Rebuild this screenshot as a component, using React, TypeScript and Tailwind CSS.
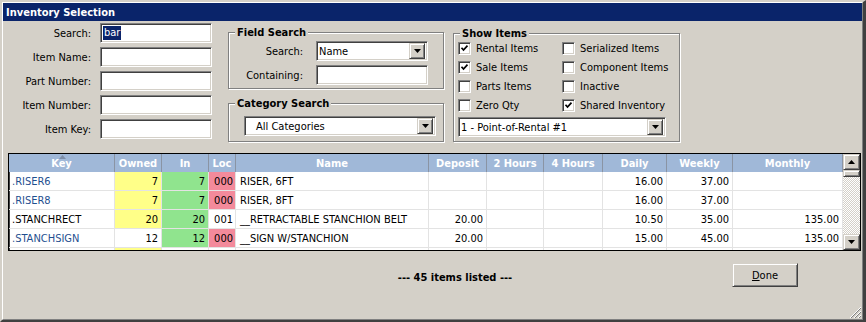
import React from "react";

type Row = {
  key: string;
  blue: boolean;
  owned: string;
  ownedColor: string;
  inQty: string;
  loc: string;
  locPink: boolean;
  name: string;
  deposit: string;
  daily: string;
  weekly: string;
  monthly: string;
};

const rows: Row[] = [
  { key: ".RISER6", blue: true, owned: "7", ownedColor: "bg-[#ffff88]", inQty: "7", loc: "000", locPink: true, name: "RISER, 6FT", deposit: "", daily: "16.00", weekly: "37.00", monthly: "" },
  { key: ".RISER8", blue: true, owned: "7", ownedColor: "bg-[#ffff88]", inQty: "7", loc: "000", locPink: true, name: "RISER, 8FT", deposit: "", daily: "16.00", weekly: "37.00", monthly: "" },
  { key: ".STANCHRECT", blue: false, owned: "20", ownedColor: "bg-[#ffff88]", inQty: "20", loc: "001", locPink: false, name: "__RETRACTABLE STANCHION BELT", deposit: "20.00", daily: "10.50", weekly: "35.00", monthly: "135.00" },
  { key: ".STANCHSIGN", blue: true, owned: "12", ownedColor: "bg-white", inQty: "12", loc: "000", locPink: true, name: "__SIGN W/STANCHION", deposit: "20.00", daily: "15.00", weekly: "45.00", monthly: "135.00" },
  { key: "", blue: false, owned: "", ownedColor: "bg-[#ffff88]", inQty: "", loc: "", locPink: false, name: "", deposit: "", daily: "", weekly: "", monthly: "" },
];

const headers = [
  { label: "Key", w: "w-[106px]" },
  { label: "Owned", w: "w-[47px]" },
  { label: "In", w: "w-[47px]" },
  { label: "Loc", w: "w-[27px]" },
  { label: "Name", w: "w-[193px]" },
  { label: "Deposit", w: "w-[58px]" },
  { label: "2 Hours", w: "w-[57px]" },
  { label: "4 Hours", w: "w-[59px]" },
  { label: "Daily", w: "w-[64px]" },
  { label: "Weekly", w: "w-[66px]" },
  { label: "Monthly", w: "w-[110px]" },
];

const sunken =
  "border border-t-[#808080] border-l-[#808080] border-b-white border-r-white shadow-[inset_1px_1px_0_#404040,inset_-1px_-1px_0_#d4d0c8]";
const raised =
  "border border-t-[#d4d0c8] border-l-[#d4d0c8] border-b-[#404040] border-r-[#404040] shadow-[inset_1px_1px_0_#fff,inset_-1px_-1px_0_#808080]";

function DownArrow() {
  return (
    <svg width="7" height="4" viewBox="0 0 7 4">
      <path d="M0 0h7L3.5 4z" fill="#000" />
    </svg>
  );
}

function TextBox({ value, selected }: { value?: string; selected?: boolean }) {
  return (
    <div className={`h-[20px] bg-white pl-[2px] flex items-center ${sunken}`}>
      {value && (
        <span className={selected ? "bg-[#0a246a] text-white px-px leading-[14px]" : ""}>{value}</span>
      )}
    </div>
  );
}

function Select({ value, w, indent }: { value: string; w: string; indent: string }) {
  return (
    <div className={`h-[20px] ${w} bg-white flex items-center pr-[2px] ${sunken}`}>
      <span className={`flex-1 ${indent}`}>{value}</span>
      <div className={`w-[16px] h-[16px] bg-[#d4d0c8] flex items-center justify-center ${raised}`}>
        <DownArrow />
      </div>
    </div>
  );
}

function Check({ label, checked }: { label: string; checked?: boolean }) {
  return (
    <div className="flex items-center h-[13px] gap-[5px]">
      <div className={`w-[13px] h-[13px] bg-white flex items-center justify-center ${sunken}`}>
        {checked && (
          <svg width="9" height="9" viewBox="0 0 9 9">
            <path d="M1.5 3.8l2 2.2 4-4.4" stroke="#000" strokeWidth="1.7" fill="none" />
          </svg>
        )}
      </div>
      <span className="whitespace-nowrap">{label}</span>
    </div>
  );
}

function GroupBox({ title, className, children }: { title: string; className: string; children: React.ReactNode }) {
  return (
    <div className={`border border-[#808080] shadow-[1px_1px_0_#fff,inset_1px_1px_0_#fff] ${className}`}>
      <div className="-mt-[7px] ml-[6px] px-[2px] w-fit bg-[#d4d0c8] font-bold leading-[13px]">{title}</div>
      {children}
    </div>
  );
}

export default function App() {
  return (
    <div className="w-[866px] h-[322px] bg-[#d4d0c8] text-[11px] leading-[13px] text-black font-['DejaVu_Sans_Condensed','DejaVu_Sans',sans-serif] border-l-2 border-t-2 border-r-[3px] border-b-2 border-l-[#d4d0c8] border-t-[#d4d0c8] border-r-[#404040] border-b-[#404040]">
      <div className="relative h-full flex flex-col border border-t-white border-l-white border-r-[#808080] border-b-[#808080]">
        <div className="h-[18px] bg-[#0a246a] text-white font-bold pl-[3px] flex items-center">Inventory Selection</div>

        <div className="flex items-start">
          <div className="mt-[2px] grid grid-cols-[88px_112px] gap-x-[9px] gap-y-[4px] items-center">
            <span className="text-right">Search:</span>
            <TextBox value="bar" selected />
            <span className="text-right">Item Name:</span>
            <TextBox />
            <span className="text-right">Part Number:</span>
            <TextBox />
            <span className="text-right">Item Number:</span>
            <TextBox />
            <span className="text-right">Item Key:</span>
            <TextBox />
          </div>

          <div className="ml-[16px] mt-[11px] w-[216px] flex flex-col">
            <GroupBox title="Field Search" className="h-[57px]">
              <div className="mt-[2px] grid grid-cols-[74px_112px] gap-x-[13px] gap-y-[4px] items-center">
                <span className="text-right">Search:</span>
                <Select value="Name" w="w-[112px]" indent="pl-[2px]" />
                <span className="text-right">Containing:</span>
                <TextBox />
              </div>
            </GroupBox>
            <GroupBox title="Category Search" className="mt-[14px] h-[39px]">
              <div className="mt-[6px] ml-[15px]">
                <Select value="All Categories" w="w-[192px]" indent="pl-[11px]" />
              </div>
            </GroupBox>
          </div>

          <div className="ml-[9px] mt-[12px]">
            <GroupBox title="Show Items" className="w-[227px] h-[109px]">
              <div className="mt-[2px] pl-[4px] grid grid-cols-[104px_1fr] gap-y-[6px]">
                <Check label="Rental Items" checked />
                <Check label="Serialized Items" />
                <Check label="Sale Items" checked />
                <Check label="Component Items" />
                <Check label="Parts Items" />
                <Check label="Inactive" />
                <Check label="Zero Qty" />
                <Check label="Shared Inventory" checked />
              </div>
              <div className="mt-[5px] ml-[4px]">
                <Select value="1 - Point-of-Rental #1" w="w-[208px]" indent="pl-[2px]" />
              </div>
            </GroupBox>
          </div>
        </div>

        <div className="ml-[5px] mr-px mt-[11px] h-[98px] flex border border-black shadow-[inset_1px_1px_0_#404040] bg-white">
          <div className="flex-1 overflow-hidden">
            <div className="flex h-[18px] bg-[#a0b8d8] text-white font-bold">
              {headers.map((h) => (
                <div
                  key={h.label}
                  className={`${h.w} relative shrink-0 border-r border-[#8a94a4] flex items-center justify-center`}
                >
                  {h.label === "Key" && (
                    <svg className="absolute top-[1px] left-[50px]" width="7" height="4" viewBox="0 0 7 4">
                      <path d="M0 4h7L3.5 0z" fill="#7d8ea8" />
                    </svg>
                  )}
                  {h.label}
                </div>
              ))}
            </div>
            {rows.map((r, i) => (
              <div key={i} className="flex h-[19px] border-b border-[#e3e3e3]">
                <div className={`w-[106px] shrink-0 border-r border-[#e3e3e3] pl-[3px] flex items-center ${r.blue ? "text-[#1f4f8f]" : ""}`}>
                  {r.key}
                </div>
                <div className={`w-[47px] shrink-0 border-r border-[#e3e3e3] pr-[3px] flex items-center justify-end ${r.ownedColor}`}>
                  {r.owned}
                </div>
                <div className={`w-[47px] shrink-0 border-r border-[#e3e3e3] pr-[3px] flex items-center justify-end ${r.inQty ? "bg-[#90e48e]" : ""}`}>
                  {r.inQty}
                </div>
                <div className={`w-[27px] shrink-0 border-r border-[#e3e3e3] pr-[2px] flex items-center justify-end ${r.locPink ? "bg-[#f38a9b]" : ""}`}>
                  {r.loc}
                </div>
                <div className="w-[193px] shrink-0 border-r border-[#e3e3e3] pl-[4px] flex items-center whitespace-nowrap">
                  {r.name}
                </div>
                <div className="w-[58px] shrink-0 border-r border-[#e3e3e3] pr-[3px] flex items-center justify-end">{r.deposit}</div>
                <div className="w-[57px] shrink-0 border-r border-[#e3e3e3]" />
                <div className="w-[59px] shrink-0 border-r border-[#e3e3e3]" />
                <div className="w-[64px] shrink-0 border-r border-[#e3e3e3] pr-[3px] flex items-center justify-end">{r.daily}</div>
                <div className="w-[66px] shrink-0 border-r border-[#e3e3e3] pr-[3px] flex items-center justify-end">{r.weekly}</div>
                <div className="w-[110px] shrink-0 border-r border-[#e3e3e3] pr-[3px] flex items-center justify-end">{r.monthly}</div>
              </div>
            ))}
          </div>
          <div className="w-[17px] flex flex-col bg-[repeating-conic-gradient(#fff_0_25%,#d4d0c8_0_50%)] bg-[length:2px_2px]">
            <div className={`h-[16px] bg-[#d4d0c8] flex items-center justify-center ${raised}`}>
              <svg width="7" height="4" viewBox="0 0 7 4">
                <path d="M0 4h7L3.5 0z" fill="#000" />
              </svg>
            </div>
            <div className={`h-[7px] bg-[#d4d0c8] ${raised}`} />
            <div className="flex-1" />
            <div className={`h-[16px] bg-[#d4d0c8] flex items-center justify-center ${raised}`}>
              <DownArrow />
            </div>
          </div>
        </div>

        <div className="flex items-start pt-[12px] pl-[356px]">
          <div className="w-[192px] mt-[8px] text-center font-bold">--- 45 items listed ---</div>
          <button className={`ml-auto mr-[64px] w-[66px] h-[24px] bg-[#d4d0c8] ${raised}`}>
            <span className="underline">D</span>one
          </button>
        </div>

        <svg className="absolute right-0 bottom-0" width="13" height="13" viewBox="0 0 13 13">
          <path d="M12 1L1 12M12 5L5 12M12 9L9 12" stroke="#fff" strokeWidth="1" />
          <path d="M12 2L2 12M12 6L6 12M12 10L10 12" stroke="#808080" strokeWidth="1" />
        </svg>
      </div>
    </div>
  );
}
